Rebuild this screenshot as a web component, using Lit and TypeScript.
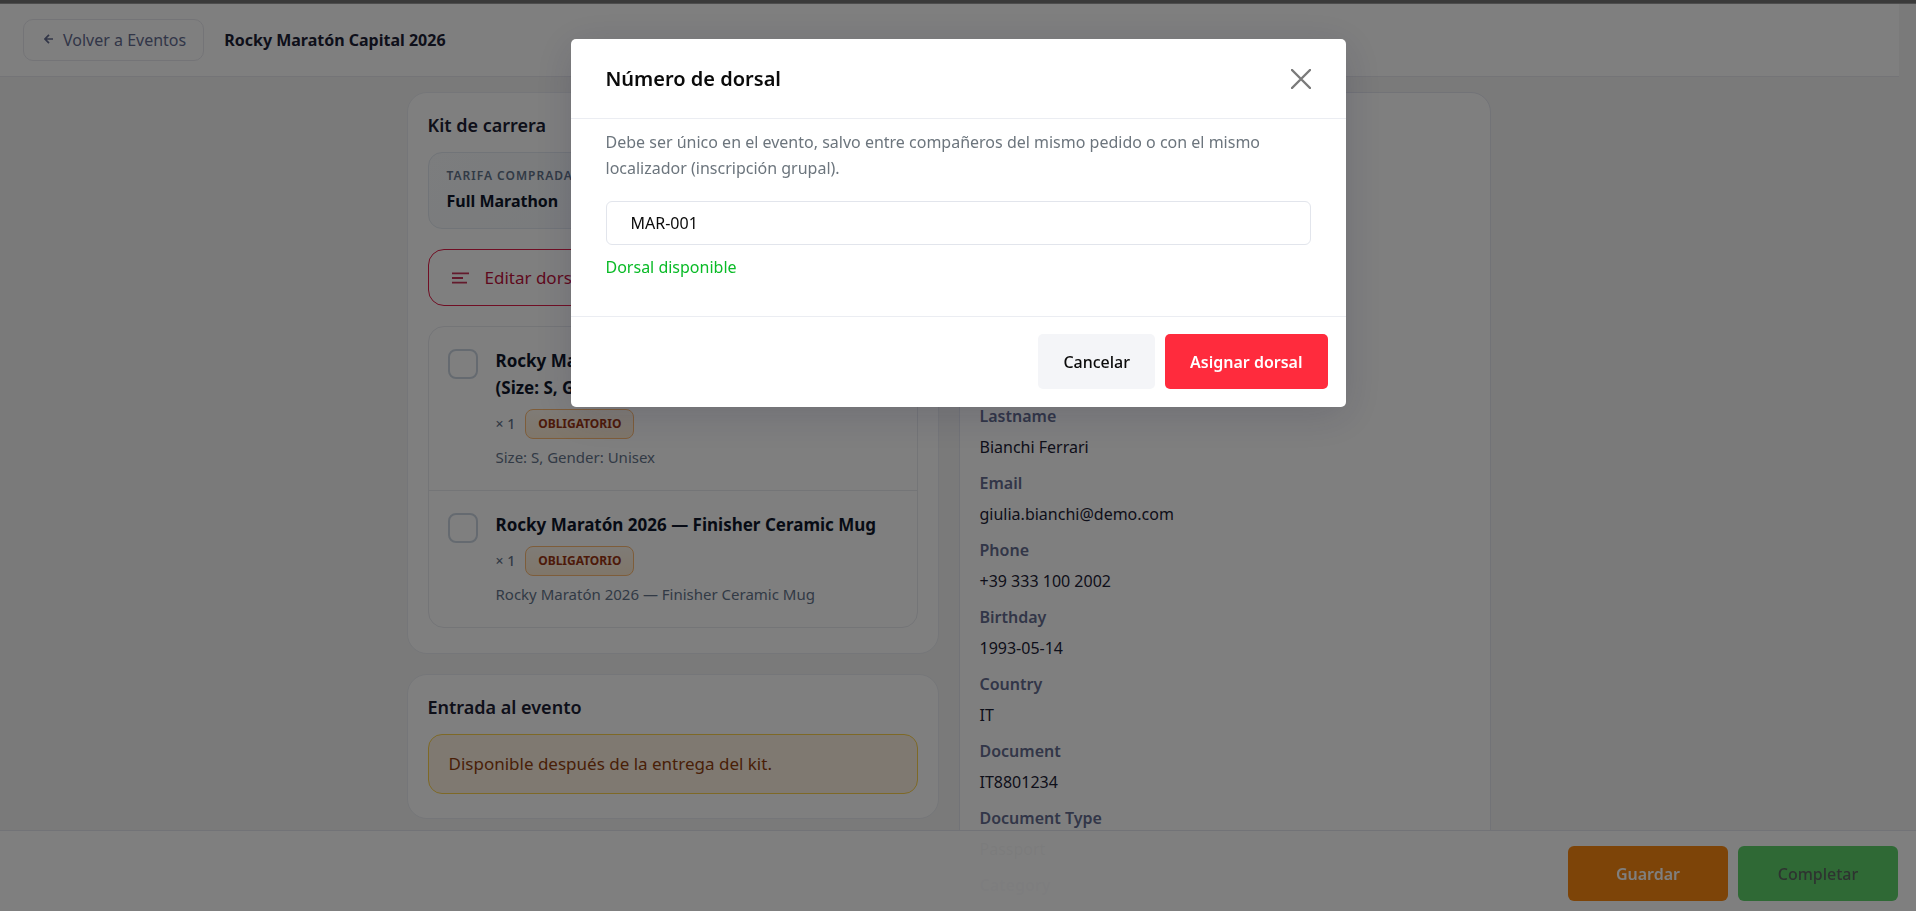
import { LitElement, html, css } from "lit";
import { customElement, state } from "lit/decorators.js";

interface KitItem {
  id: string;
  title: string;
  quantity: number;
  detail: string;
}

interface Field {
  label: string;
  value?: string;
}

const ITEMS: KitItem[] = [
  {
    id: "shirt",
    title: "Rocky Maratón 2026 — Official Race T-Shirt (Size: S, Gender: Unisex)",
    quantity: 1,
    detail: "Size: S, Gender: Unisex",
  },
  {
    id: "mug",
    title: "Rocky Maratón 2026 — Finisher Ceramic Mug",
    quantity: 1,
    detail: "Rocky Maratón 2026 — Finisher Ceramic Mug",
  },
];

const FIELDS: Field[] = [
  { label: "Name", value: "Giulia" },
  { label: "Lastname", value: "Bianchi Ferrari" },
  { label: "Email", value: "giulia.bianchi@demo.com" },
  { label: "Phone", value: "+39 333 100 2002" },
  { label: "Birthday", value: "1993-05-14" },
  { label: "Country", value: "IT" },
  { label: "Document", value: "IT8801234" },
  { label: "Document Type", value: "Passport" },
  { label: "Category" },
];

@customElement("kit-card")
export class KitCard extends LitElement {
  static styles = css`
    :host {
      display: block;
    }
    .card {
      padding: 20px 20px 25px;
      background: #fff;
      border: 1px solid #ebedf2;
      border-radius: 20px;
    }
    .heading {
      margin: 0 0 15px;
      font-size: 18px;
      line-height: 24px;
      font-weight: 600;
      color: #1c2135;
    }
    .stack {
      display: flex;
      flex-direction: column;
      gap: 20px;
    }
    .fare {
      padding: 12px 18px;
      border: 1px solid #e2e8f0;
      border-radius: 14px;
      background: linear-gradient(135deg, #f8fafc, #eef2f7);
    }
    .fare-label {
      margin: 0;
      font-size: 12px;
      line-height: 22px;
      font-weight: 600;
      letter-spacing: 1px;
      text-transform: uppercase;
      color: #64748b;
    }
    .fare-value {
      margin: 0;
      font-size: 16px;
      line-height: 29px;
      font-weight: 700;
      color: #0f172a;
    }
    .edit {
      display: flex;
      align-items: center;
      gap: 16px;
      width: 100%;
      height: 57px;
      padding: 0 23px;
      border: 1px solid #e11d48;
      border-radius: 16px;
      background: transparent;
      font: inherit;
      font-size: 17px;
      color: #be123c;
    }
    .items {
      margin: 0;
      padding: 0;
      list-style: none;
      border: 1px solid #e8eaef;
      border-radius: 16px;
    }
    .item {
      display: flex;
      gap: 18px;
      padding: 20px 19px 21px;
    }
    .item + .item {
      border-top: 1px solid #e8eaef;
    }
    .check {
      appearance: none;
      box-sizing: border-box;
      flex: none;
      width: 30px;
      height: 30px;
      margin: 2px 0 0;
      border: 2px solid #cbd5e1;
      border-radius: 8px;
      background: #fff;
    }
    .item-title {
      display: block;
      font-size: 17px;
      line-height: 27px;
      font-weight: 700;
      color: #0f172a;
    }
    .meta {
      display: flex;
      align-items: center;
      gap: 10px;
      margin: 8px 0 6px;
      font-size: 14px;
      line-height: 28px;
      font-weight: 500;
      color: #64748b;
    }
    .badge {
      padding: 0 12px;
      border: 1px solid #fdba74;
      border-radius: 8px;
      background: linear-gradient(180deg, #fff7ed, #ffedd5);
      font-size: 12px;
      font-weight: 700;
      text-transform: uppercase;
      color: #9a3412;
    }
    .detail {
      margin: 0;
      font-size: 15px;
      line-height: 24px;
      color: #64748b;
    }
  `;

  render() {
    return html`
      <section class="card">
        <h2 class="heading">Kit de carrera</h2>
        <div class="stack">
          <div class="fare">
            <p class="fare-label">Tarifa comprada</p>
            <p class="fare-value">Full Marathon</p>
          </div>
          <button class="edit" type="button">
            <svg width="17" height="12" viewBox="0 0 17 12" aria-hidden="true">
              <g stroke="currentColor" stroke-width="1.8" opacity="0.85">
                <path d="M0 1.3h17M0 6h11M0 10.7h15" />
              </g>
            </svg>
            Editar dorsal
          </button>
          <ul class="items">
            ${ITEMS.map(
              (item) => html`
                <li class="item">
                  <input class="check" type="checkbox" id=${item.id} />
                  <div>
                    <label class="item-title" for=${item.id}>${item.title}</label>
                    <div class="meta">
                      <span>× ${item.quantity}</span>
                      <span class="badge">Obligatorio</span>
                    </div>
                    <p class="detail">${item.detail}</p>
                  </div>
                </li>
              `
            )}
          </ul>
        </div>
      </section>
    `;
  }
}

@customElement("entry-card")
export class EntryCard extends LitElement {
  static styles = css`
    :host {
      display: block;
    }
    .card {
      padding: 20px 20px 24px;
      background: #fff;
      border: 1px solid #ebedf2;
      border-radius: 20px;
    }
    .heading {
      margin: 0 0 15px;
      font-size: 18px;
      line-height: 24px;
      font-weight: 600;
      color: #1c2135;
    }
    .notice {
      margin: 0;
      padding: 17px 20px;
      border: 1px solid #fcd34d;
      border-radius: 14px;
      background: #fff3e2;
      font-size: 17px;
      line-height: 24px;
      color: #92400e;
    }
  `;

  render() {
    return html`
      <section class="card">
        <h2 class="heading">Entrada al evento</h2>
        <p class="notice">Disponible después de la entrega del kit.</p>
      </section>
    `;
  }
}

@customElement("participant-card")
export class ParticipantCard extends LitElement {
  static styles = css`
    :host {
      display: block;
    }
    .card {
      padding: 20px;
      background: #fff;
      border: 1px solid #e4e6ef;
      border-radius: 20px;
    }
    .photo {
      height: 224px;
    }
    .fields {
      margin: 0;
      line-height: 24px;
    }
    .label {
      font-weight: 600;
      color: #646c90;
    }
    .value {
      margin: 7px 0 12px;
      color: #1c2135;
    }
  `;

  render() {
    return html`
      <section class="card">
        <div class="photo"></div>
        <dl class="fields">
          ${FIELDS.map(
            (field) => html`
              <dt class="label">${field.label}</dt>
              <dd class="value">${field.value ?? ""}</dd>
            `
          )}
        </dl>
      </section>
    `;
  }
}

@customElement("bib-dialog")
export class BibDialog extends LitElement {
  @state() private bib = "MAR-001";

  static styles = css`
    :host {
      position: fixed;
      inset: 0;
      z-index: 10;
      display: flex;
      justify-content: center;
      align-items: flex-start;
      padding-top: 39px;
      background: rgba(0, 0, 0, 0.5);
    }
    .dialog {
      width: 775px;
      max-width: 100%;
      border-radius: 5px;
      background: #fff;
      box-shadow: 0 8px 40px rgba(24, 24, 60, 0.16);
    }
    .head {
      display: flex;
      align-items: center;
      justify-content: space-between;
      padding: 24px 35px;
      border-bottom: 1px solid #ebedf2;
    }
    .title {
      margin: 0;
      font-size: 20px;
      line-height: 31px;
      font-weight: 600;
      color: #0a0a0a;
    }
    .close {
      display: flex;
      padding: 0;
      border: 0;
      background: none;
      color: #7a7a7a;
    }
    .body {
      padding: 10px 35px 37px;
    }
    .help {
      margin: 0 0 20px;
      line-height: 26px;
      color: #6c757d;
    }
    .field {
      box-sizing: border-box;
      display: block;
      width: 100%;
      height: 44px;
      padding: 0 24px;
      border: 1px solid #e2e5ec;
      border-radius: 6px;
      font: inherit;
      color: #0a0a0a;
      outline: none;
    }
    .status {
      margin: 10px 0 0;
      line-height: 24px;
      color: #0abb27;
    }
    .foot {
      display: flex;
      justify-content: flex-end;
      gap: 10px;
      padding: 17px 18px 18px;
      border-top: 1px solid #ebedf2;
    }
    .button {
      height: 55px;
      padding: 0 25px;
      border: 0;
      border-radius: 5px;
      font: inherit;
      font-weight: 500;
      background: #f4f5f8;
      color: #0a0a0a;
    }
    .primary {
      font-weight: 600;
      background: #ff2b3d;
      color: #fff;
    }
  `;

  render() {
    return html`
      <div class="dialog" role="dialog" aria-modal="true" aria-labelledby="title">
        <header class="head">
          <h2 class="title" id="title">Número de dorsal</h2>
          <button class="close" type="button" aria-label="Cerrar">
            <svg width="20" height="20" viewBox="0 0 20 20" aria-hidden="true">
              <path
                d="M1 1l18 18M19 1L1 19"
                stroke="currentColor"
                stroke-width="2.4"
                stroke-linecap="round"
              />
            </svg>
          </button>
        </header>
        <div class="body">
          <p class="help" id="help">
            Debe ser único en el evento, salvo entre compañeros del mismo pedido o con el mismo
            localizador (inscripción grupal).
          </p>
          <input
            class="field"
            type="text"
            aria-labelledby="title"
            aria-describedby="help"
            .value=${this.bib}
            @input=${(e: Event) => (this.bib = (e.target as HTMLInputElement).value)}
          />
          <p class="status" role="status">Dorsal disponible</p>
        </div>
        <footer class="foot">
          <button class="button" type="button">Cancelar</button>
          <button class="button primary" type="button">Asignar dorsal</button>
        </footer>
      </div>
    `;
  }
}

@customElement("app-root")
export class AppRoot extends LitElement {
  static styles = css`
    :host {
      display: block;
      height: 100vh;
      overflow: hidden;
      background: #f5f5f5;
      font-family: "Noto Sans", "Open Sans", sans-serif;
      font-size: 16px;
    }
    .strip {
      height: 3px;
      background: #757575;
      border-bottom: 1px solid #9a9a9a;
    }
    .page {
      margin-right: 17px;
    }
    .bar {
      display: flex;
      align-items: center;
      gap: 20px;
      padding: 15px 23px;
      background: #fff;
      border-bottom: 1px solid #e8e8ee;
    }
    .back {
      display: flex;
      align-items: center;
      gap: 9px;
      padding: 8px 17px 8px 20px;
      border: 1px solid #e8e8ee;
      border-radius: 10px;
      line-height: 24px;
      text-decoration: none;
      color: #646c90;
    }
    .event {
      margin: 0;
      font-size: 16px;
      line-height: 24px;
      font-weight: 700;
      color: #1c2135;
    }
    .columns {
      display: grid;
      grid-template-columns: 1fr 1fr;
      align-items: start;
      gap: 20px;
      max-width: 1084px;
      margin: 15px auto 0;
      padding-right: 2px;
    }
    .column {
      display: flex;
      flex-direction: column;
      gap: 20px;
    }
    .actions {
      position: fixed;
      inset: auto 0 0;
      display: flex;
      justify-content: flex-end;
      gap: 10px;
      padding: 15px 18px 10px;
      border-top: 1px solid #e4e6ef;
      background: rgba(255, 255, 255, 0.97);
    }
    .action {
      width: 160px;
      height: 55px;
      border: 0;
      border-radius: 6px;
      font: inherit;
    }
    .save {
      background: #fa8810;
      font-weight: 600;
      color: #fff;
    }
    .complete {
      background: #5ed36b;
      font-weight: 500;
      color: #5c6660;
    }
  `;

  render() {
    return html`
      <div class="strip"></div>
      <div class="page">
        <header class="bar">
          <a class="back" href="#eventos">
            <svg width="10" height="12" viewBox="0 0 10 12" fill="none" aria-hidden="true">
              <path d="M9 5H1.2M5 0.8L1 5l4 4.2" stroke="currentColor" stroke-width="1.7" />
            </svg>
            Volver a Eventos
          </a>
          <h1 class="event">Rocky Maratón Capital 2026</h1>
        </header>
        <main class="columns">
          <div class="column">
            <kit-card></kit-card>
            <entry-card></entry-card>
          </div>
          <participant-card></participant-card>
        </main>
      </div>
      <footer class="actions">
        <button class="action save" type="button">Guardar</button>
        <button class="action complete" type="button" disabled>Completar</button>
      </footer>
      <bib-dialog></bib-dialog>
    `;
  }
}
